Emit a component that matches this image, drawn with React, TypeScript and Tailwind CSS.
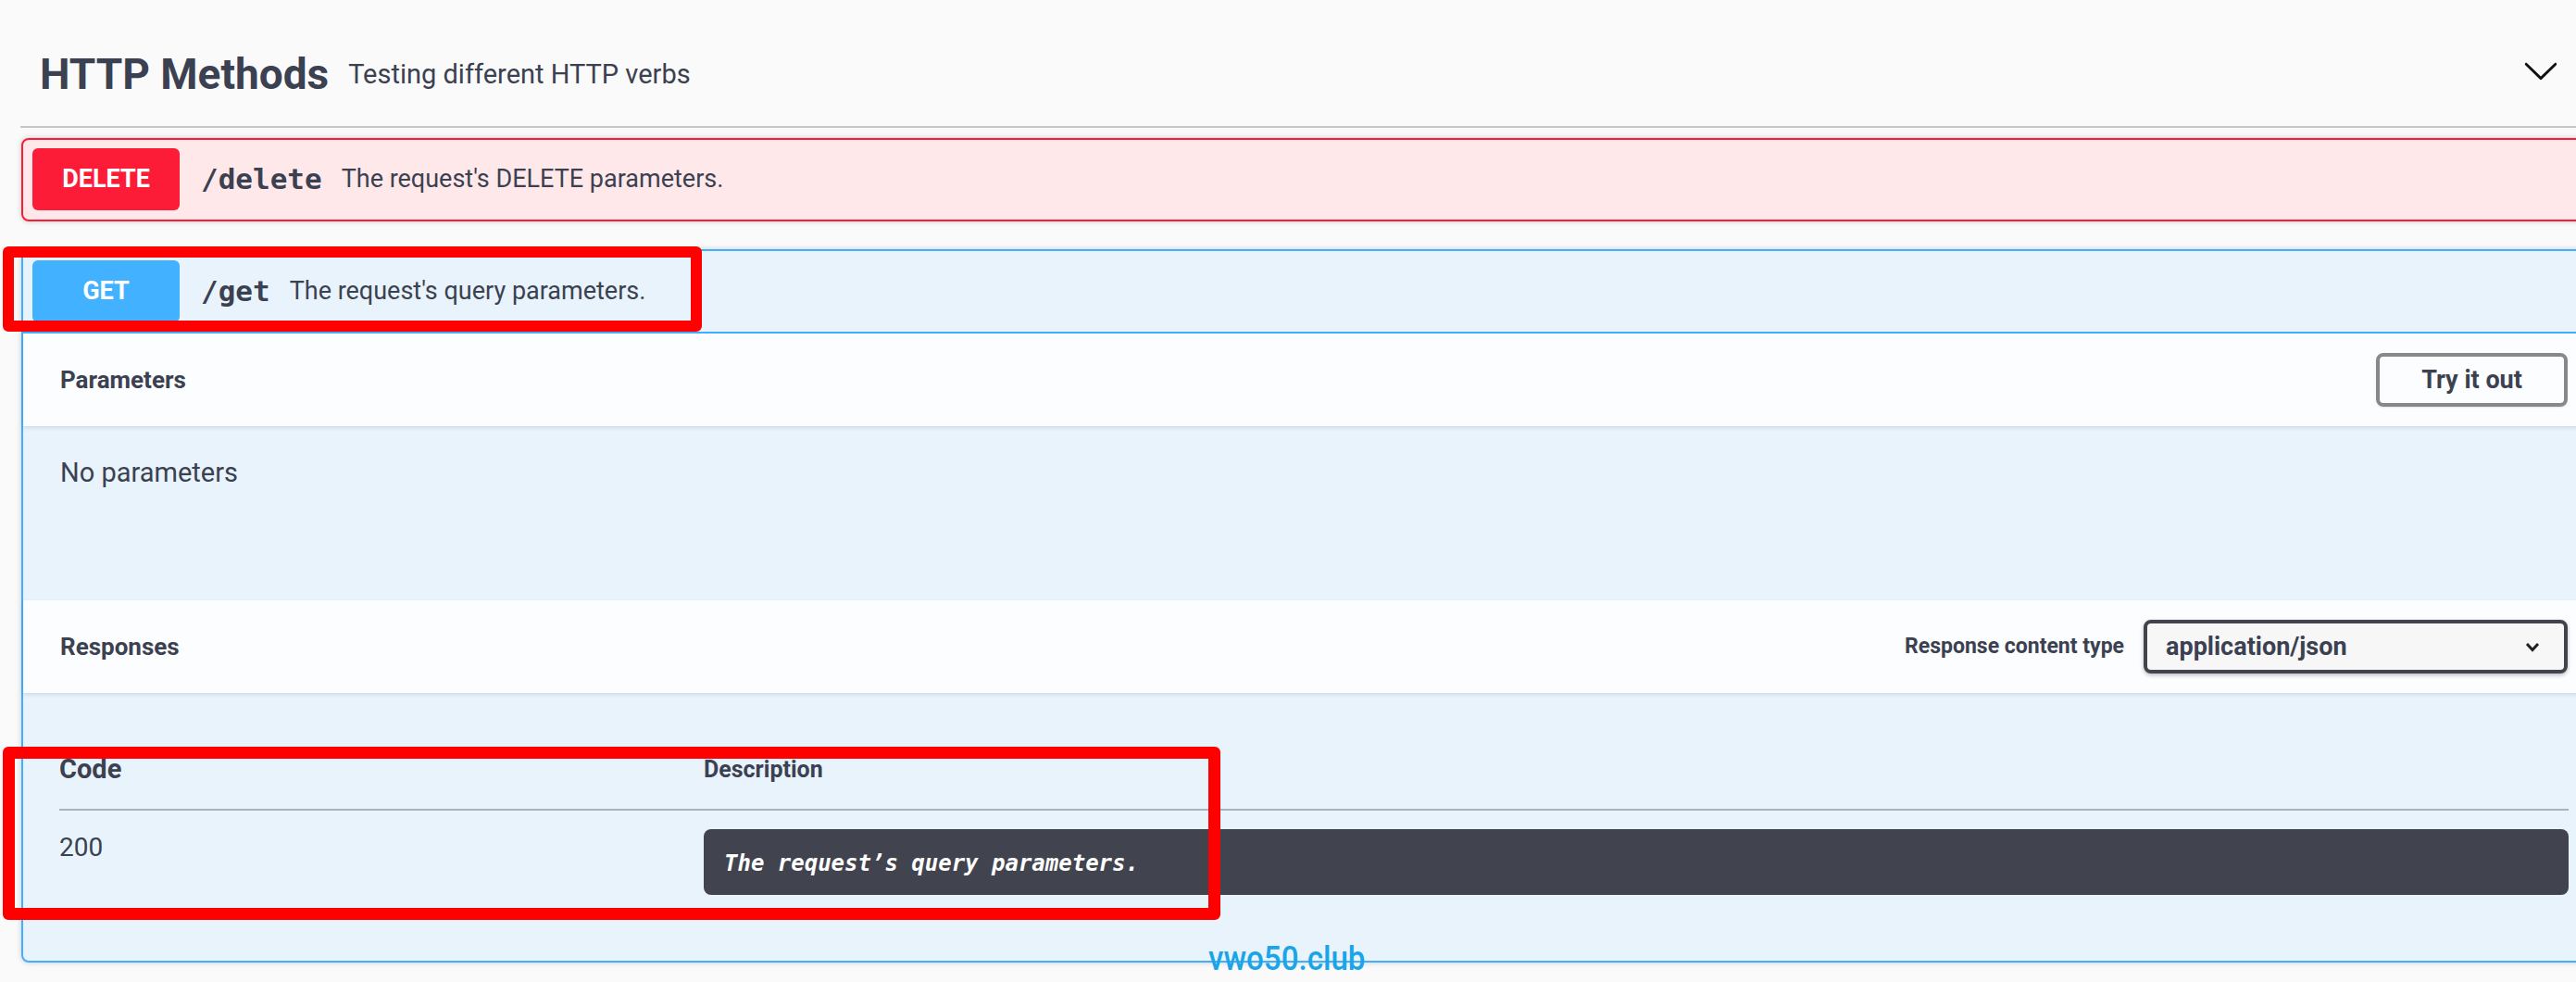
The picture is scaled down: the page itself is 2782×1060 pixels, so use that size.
import { ReactNode } from "react";

const Badge = ({ label, color }: { label: string; color: string }) => (
  <div
    className={`flex h-[67px] w-[159px] shrink-0 items-center justify-center rounded-[6px] text-[27px] font-bold text-white ${color}`}
  >
    {label}
  </div>
);

const Summary = ({ badge, path, text }: { badge: ReactNode; path: string; text: string }) => (
  <div className="flex items-center">
    {badge}
    <span className="ml-[23px] font-['DejaVu_Sans_Mono',monospace] text-[31px] font-bold text-[#3b4151]">
      {path}
    </span>
    <span className="ml-[21px] text-[27px] text-[#3b4151]">{text}</span>
  </div>
);

const Chevron = () => (
  <svg width="40" height="40" viewBox="0 0 20 20" className="-mt-[8px]">
    <path
      fill="#111"
      d="M17.418 6.109c.272-.268.709-.268.979 0s.271.701 0 .969l-7.908 7.83c-.27.268-.707.268-.979 0l-7.908-7.83c-.27-.268-.27-.701 0-.969.271-.268.709-.268.979 0L10 13.25l7.418-7.141z"
    />
  </svg>
);

export default function App() {
  return (
    <div className="relative h-[1060px] w-[2782px] overflow-hidden bg-[#fafafa] font-['Roboto',sans-serif] text-[#3b4151]">
      <div className="ml-[22px] w-[2794px] pt-[24px]">
        {/* tag header */}
        <div className="flex h-[114px] items-center border-b-2 border-[#c4c6cb] pl-[21px] pr-[52px]">
          <h3 className="text-[46px] font-bold leading-none">HTTP Methods</h3>
          <small className="ml-[21px] text-[29px] leading-none">Testing different HTTP verbs</small>
          <div className="flex-1" />
          <Chevron />
        </div>

        {/* DELETE */}
        <div className="mx-px mt-[11px] rounded-[8px] border-2 border-[#fd1c37] bg-[#ffe8e9] pb-[10px] pl-[10px] pt-[9px] shadow-[0_0_6px_rgba(0,0,0,0.19)]">
          <Summary
            badge={<Badge label="DELETE" color="bg-[#fd1c37]" />}
            path="/delete"
            text="The request's DELETE parameters."
          />
        </div>

        {/* GET */}
        <div className="mx-px mt-[30px] rounded-[8px] border-2 border-[#40b0fe] bg-[#e8f3fc] shadow-[0_0_6px_rgba(0,0,0,0.19)]">
          <div className="border-b-2 border-[#40b0fe] py-[10px] pl-[10px]">
            <Summary
              badge={<Badge label="GET" color="bg-[#42b1ff]" />}
              path="/get"
              text="The request's query parameters."
            />
          </div>

          <div className="flex h-[100px] items-center justify-between bg-[#fcfdfe] px-[40px] shadow-[0_2px_4px_rgba(0,0,0,0.1)]">
            <h4 className="text-[26px] font-bold">Parameters</h4>
            <button className="h-[58px] w-[207px] rounded-[8px] border-4 border-[#888] bg-transparent text-[27px] font-bold text-[#3b4151] shadow-[0_1px_2px_rgba(0,0,0,0.1)]">
              Try it out
            </button>
          </div>

          <div className="h-[188px] px-[40px] pt-[30px]">
            <p className="text-[29px] leading-[40px]">No parameters</p>
          </div>

          <div className="flex h-[100px] items-center bg-[#fcfdfe] px-[40px] shadow-[0_2px_4px_rgba(0,0,0,0.1)]">
            <h4 className="text-[26px] font-bold">Responses</h4>
            <div className="flex-1" />
            <span className="mr-[21px] text-[23px] font-bold">Response content type</span>
            <div className="flex h-[58px] w-[458px] items-center justify-between rounded-[8px] border-4 border-[#41444e] bg-[#f7f7f7] pl-[20px] pr-[26px] shadow-[0_2px_4px_rgba(0,0,0,0.25)]">
              <span className="text-[27px] font-bold">application/json</span>
              <svg width="16" height="12" viewBox="0 0 16 12">
                <polyline points="2,3 8,9.5 14,3" fill="none" stroke="#222" strokeWidth="3" />
              </svg>
            </div>
          </div>

          <div className="h-[289px] px-[39px] pt-[40px]">
            <div className="flex h-[87px] items-center border-b-2 border-[#a8b2c0]">
              <div className="w-[696px] text-[29px] font-bold">Code</div>
              <div className="text-[25px] font-bold">Description</div>
            </div>
            <div className="flex pt-[20px]">
              <div className="w-[696px] text-[28px] leading-[40px]">200</div>
              <div className="flex h-[71px] flex-1 items-center rounded-[8px] bg-[#41444e] px-[22px] pt-[3px]">
                <span className="font-['DejaVu_Sans_Mono',monospace] text-[24px] font-semibold italic text-white">
                  The request’s query parameters.
                </span>
              </div>
            </div>
          </div>
        </div>
      </div>

      {/* annotation boxes */}
      <div className="absolute left-[3px] top-[266px] h-[92px] w-[755px] rounded-[6px] border-[12px] border-[#ff0000]" />
      <div className="absolute left-[3px] top-[806px] h-[187px] w-[1315px] rounded-[6px] border-[13px] border-[#ff0000]" />

      {/* watermark */}
      <div className="absolute left-[1305px] top-[1017px] origin-left scale-x-[0.92] text-[36px] font-medium leading-none text-[#1aa5e8]">
        vwo50.club
      </div>
    </div>
  );
}
